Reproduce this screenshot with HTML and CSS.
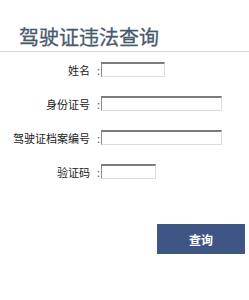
FILE: index.html
```html
<!DOCTYPE html>
<html lang="zh-CN">
<head>
    <meta charset="UTF-8">
    <title>驾驶证违法查询</title>
    <link rel="stylesheet" href="styles.css">
</head>
<body>

    <h1 class="title">驾驶证违法查询</h1>

    <form class="query-form">
        <div class="row">
            <label class="label">姓名</label>
            <span class="colon">:</span>
            <input type="text" class="field short">
        </div>
        <div class="row">
            <label class="label">身份证号</label>
            <span class="colon">:</span>
            <input type="text" class="field long">
        </div>
        <div class="row">
            <label class="label">驾驶证档案编号</label>
            <span class="colon">:</span>
            <input type="text" class="field long">
        </div>
        <div class="row">
            <label class="label">验证码</label>
            <span class="colon">:</span>
            <input type="text" class="field code">
        </div>

        <div class="actions">
            <button type="button" class="btn">查询</button>
        </div>
    </form>

</body>
</html>
```

FILE: styles.css
```css
body {
    margin: 0;
    background: #fff;
    font-family: "Noto Sans CJK SC", "Liberation Sans", sans-serif;
    color: #222;
}

.title {
    margin: 0;
    padding: 26px 0 3px 19px;
    font-size: 20px;
    font-weight: normal;
    line-height: 22px;
    color: #4a596d;
    -webkit-text-stroke: 0.3px #4a596d;
    border-bottom: 1px solid #d4d4d4;
}

.query-form {
    padding-top: 10px;
}

.row {
    display: flex;
    align-items: center;
    height: 15px;
    margin-bottom: 19px;
}

.label {
    width: 90px;
    text-align: right;
    font-size: 11px;
    color: #222;
}

.colon {
    width: 10px;
    text-align: right;
    padding-right: 1px;
    font-size: 11px;
    color: #555;
}

.field {
    box-sizing: border-box;
    height: 15px;
    padding: 0;
    border: 1px solid;
    border-color: #7b7b7b #dcdcdc #dcdcdc #8a8a8a;
    border-top-width: 2px;
    background: #fff;
}

.short {
    width: 64px;
}

.long {
    width: 121px;
}

.code {
    width: 55px;
}

.actions {
    display: flex;
    justify-content: flex-end;
    padding: 26px 4px 0 0;
}

.btn {
    width: 88px;
    height: 30px;
    border: none;
    background: #3f5684;
    color: #fff;
    font-family: "Noto Sans CJK SC", sans-serif;
    font-size: 12px;
    font-weight: bold;
}
```
